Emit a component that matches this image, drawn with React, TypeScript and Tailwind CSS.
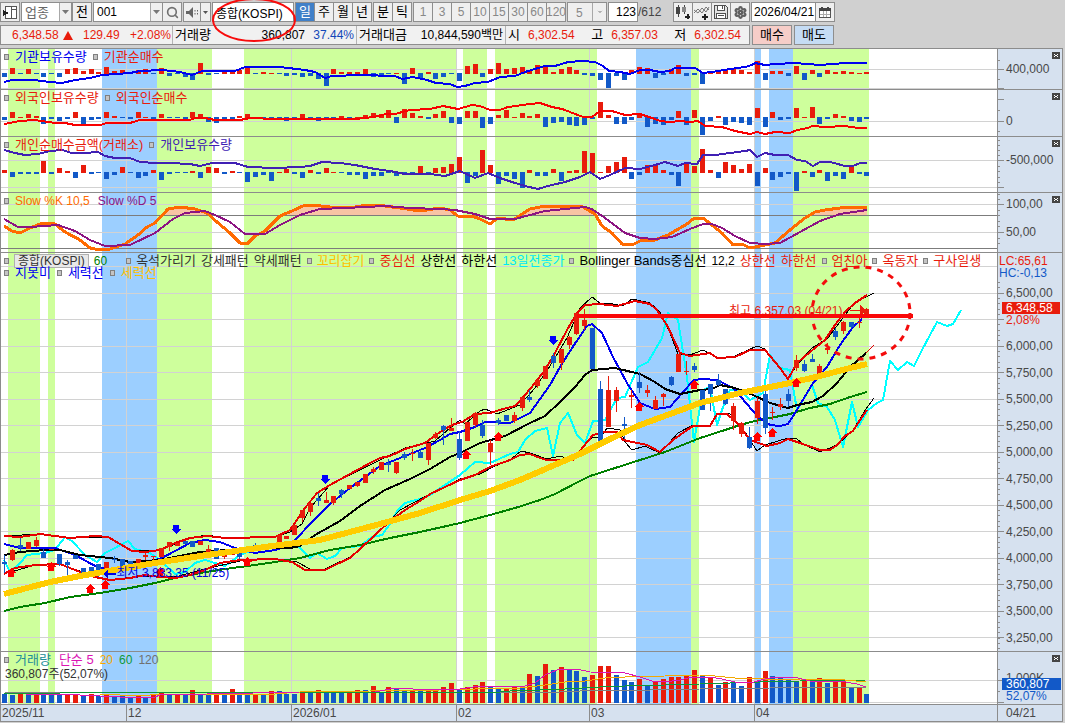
import type { ReactNode } from 'react'
import clsx from 'clsx'
import { ChevronDown, Search, Settings } from 'lucide-react'

const RED = '#e81c0c'
const BLUE = '#1259c8'
const PLOT_W = 996
const FIRST_X = 3.3
const STEP = 7.838

const barX = (i: number) => Math.round(FIRST_X + STEP * i)

// market phase bands behind every panel: [start, end, color]
const bands: [number, number, string][] = [
  [7, 39, '#ceff9c'],
  [47, 54, '#ceff9c'],
  [101, 156, '#9ccfff'],
  [156, 211, '#ceff9c'],
  [243, 456, '#ceff9c'],
  [462, 486, '#ceff9c'],
  [494, 596, '#ceff9c'],
  [635, 690, '#9ccfff'],
  [690, 698, '#ceff9c'],
  [753, 760, '#9ccfff'],
  [768, 792, '#9ccfff'],
  [792, 868, '#ceff9c'],
]

const months = [125.5, 290.5, 455.5, 588.5, 753.5]

const institution = [
  -4, 6, -1, 5, -1, -4, -1, -4, 5, 6, 3, 5, 2, 7, 3, 4, -1, 4, 5, -1, 6, -3, -1, -4, -7, 11, -2, -1, 3, 2, 4, 7, -1, 2, 1, -1, -3,
  -2, -4, -3, -6, -13, 5, 2, 2, 2, 5, -4, -3, -1, 1, -11, 6, -6, 2, -6, -4, -1, -8, 8, 10, -4, 5, 11, 5, 6, 7, 3, 9, 7, 2, 5, 7, 4,
  -2, -3, -7, -15, -3, -7, 4, 7, 6, -5, -2, 5, 9, -3, -2, -11, 2, 4, 4, 6, 4, 2, 13, -7, 3, 3, -3, 8, -7, 4, -4, 4, 2, 3, 2, 1, 2,
]

const foreign = [
  -3, 6, 1, 4, 2, -7, -2, -4, -2, 6, -7, -3, -2, 6, 2, -1, -2, 6, 1, -4, 4, -1, -1, -2, 6, 4, -5, -6, -3, -2, 2, 4, -1, -1, -2, -3,
  -4, -1, 4, -2, -4, -2, -1, 2, -1, 1, 3, 5, 4, 8, -6, 9, 5, 2, -2, 4, 7, -6, -7, 7, 7, -11, -7, 3, 8, 1, 5, 2, 4, -10, -6, -5, -8,
  -9, -8, -2, 16, 3, -7, -7, -3, 5, -10, -7, -8, -3, 7, -8, 8, -18, -4, 2, -8, -5, -6, -8, 10, -10, 6, -3, -2, 10, 1, 11, -7, -2, 4,
  2, -4, -5, -2,
]

const retail = [
  3, -5, -2, -2, -2, 12, -2, 5, 2, -6, 8, -2, -1, -7, -3, 6, -1, -6, -4, 3, -8, -2, -1, -1, 2, -6, 6, 5, -2, 2, -1, -10, -5, -3, -9,
  1, 4, -2, -6, 3, -2, 5, 1, -1, -3, -3, -7, -4, -4, -1, -4, -1, -3, 7, -3, 5, 6, 9, 16, -11, -4, 23, 8, -12, -4, -7, -16, 3, -4, -4,
  4, -9, 2, 3, 22, 20, 1, 7, 11, 16, -7, -3, 8, 8, 3, -3, -14, 10, 7, 24, 3, -6, 11, 8, 4, 9, -14, 5, -8, -5, -2, -19, 2, -5, 3, -9,
  -4, -7, 6, -2, -4,
]

// sign carries the direction of the day
const volume = [
  -9, -8, 9, -9, 8, -8, -8, -8, 8, 8, -7, 9, -7, 8, -7, -7, -6, 8, -6, 8, 11, -8, 8, -8, 13, -9, -8, 9, -8, 14, -11, -9, 9, -9, 12,
  -12, -9, -9, 12, -12, 13, -10, -10, -10, 10, 13, -13, 17, -11, 16, -14, -13, 13, -12, 12, 14, 16, 20, -13, 16, 18, 21, -16, -14, 15,
  16, -17, 29, -27, 39, -33, 36, -33, -32, -26, 28, 37, 37, -28, -23, -21, 24, -18, 21, 24, 26, 26, 27, 33, -27, 26, -18, 21, -21,
  -17, 26, -22, 32, -27, -25, -24, -21, 24, -22, 25, -20, 22, 22, -16, 15, -9,
]

// [up, high, body top, body bottom, low]
const candles: [0 | 1, number, number, number, number][] = [
  [0, 555, 562, 564, 573], [1, 549, 550, 560, 561], [0, 538, 545, 548, 551], [1, 542, 542, 549, 549], [1, 537, 540, 546, 547],
  [0, 549, 552, 558, 558], [1, 549, 549, 550, 550], [0, 554, 554, 564, 566], [0, 560, 562, 565, 575], [0, 555, 555, 559, 559],
  [0, 568, 568, 575, 575], [0, 567, 567, 576, 576], [0, 564, 564, 574, 577], [1, 562, 562, 570, 570], [0, 556, 559, 560, 563],
  [0, 559, 559, 567, 567], [0, 561, 561, 568, 568], [1, 559, 559, 565, 565], [1, 553, 555, 557, 560], [1, 556, 556, 557, 562],
  [1, 548, 548, 557, 557], [1, 542, 542, 547, 551], [1, 543, 543, 546, 546], [0, 541, 541, 544, 544], [0, 541, 541, 547, 547],
  [1, 541, 541, 545, 545], [1, 545, 549, 553, 553], [0, 548, 548, 559, 559], [1, 552, 552, 557, 559], [1, 554, 554, 555, 555],
  [0, 552, 552, 557, 559], [1, 547, 547, 549, 549], [0, 543, 545, 547, 549], [0, 544, 544, 547, 547], [0, 543, 544, 546, 546],
  [1, 535, 535, 544, 544], [1, 536, 536, 539, 539], [1, 525, 525, 535, 535], [1, 510, 510, 518, 522], [1, 503, 503, 512, 516],
  [0, 493, 498, 501, 506], [1, 492, 500, 503, 503], [1, 496, 496, 503, 505], [0, 489, 490, 494, 498], [1, 485, 485, 489, 489],
  [1, 482, 482, 486, 487], [1, 474, 474, 483, 483], [1, 467, 469, 472, 474], [1, 462, 462, 470, 470], [0, 459, 463, 465, 472],
  [1, 462, 462, 473, 474], [0, 452, 454, 458, 460], [1, 449, 453, 454, 461], [0, 450, 452, 458, 458], [1, 443, 443, 460, 465],
  [1, 432, 434, 438, 439], [0, 425, 426, 430, 445], [1, 418, 428, 431, 431], [0, 431, 439, 458, 460], [1, 422, 422, 441, 441],
  [1, 412, 413, 425, 427], [0, 420, 425, 436, 438], [1, 440, 443, 452, 465], [0, 418, 420, 423, 425], [0, 415, 415, 421, 421],
  [1, 412, 415, 421, 423], [1, 397, 397, 408, 411], [0, 390, 397, 400, 402], [1, 379, 380, 386, 388], [1, 366, 366, 379, 379],
  [0, 353, 356, 363, 368], [1, 349, 349, 363, 370], [1, 336, 337, 345, 349], [1, 313, 313, 334, 335], [1, 309, 320, 326, 330],
  [0, 328, 328, 369, 369], [0, 381, 389, 443, 446], [1, 376, 390, 427, 427], [1, 387, 390, 401, 412], [0, 417, 424, 426, 439],
  [1, 390, 395, 397, 408], [0, 372, 382, 388, 393], [1, 385, 390, 393, 397], [1, 396, 400, 409, 409], [1, 393, 394, 397, 406],
  [0, 376, 377, 385, 386], [1, 354, 354, 372, 372], [1, 361, 371, 372, 375], [0, 363, 366, 370, 372], [0, 390, 390, 410, 410],
  [0, 384, 384, 394, 411], [0, 374, 380, 385, 386], [0, 389, 389, 404, 405], [1, 403, 406, 421, 430], [1, 422, 423, 434, 437],
  [0, 427, 437, 448, 449], [1, 397, 401, 418, 424], [0, 391, 394, 428, 434], [1, 407, 412, 413, 420], [1, 398, 404, 407, 410],
  [0, 389, 394, 401, 407], [1, 355, 360, 368, 371], [0, 360, 364, 371, 372], [0, 354, 359, 362, 362], [1, 364, 366, 375, 376],
  [1, 343, 348, 350, 354], [0, 328, 331, 337, 340], [1, 321, 322, 331, 334], [0, 322, 322, 327, 328], [1, 317, 322, 323, 328],
  [1, 308, 309, 315, 315],
]

const institutionHeld =
  '4,82 12,80 34,80 50,82 62,83 75,80 90,78 102,75 130,73 140,71 162,70 180,72 192,75 202,71 235,71 245,67 280,67 305,70 315,72 325,78 332,76 360,75 395,76 402,79 413,77 427,80 436,83 450,84 457,87 465,86 475,83 488,82 500,77 515,76 525,72 545,66 555,66 568,62 582,61 595,62 603,66 609,71 620,72 630,74 640,70 650,70 660,72 670,71 675,68 695,68 703,73 712,72 730,69 745,67 752,65 755,63 765,65 775,64 795,63 820,65 845,63 867,63'
const foreignHeld =
  '4,124 20,121 35,120 55,123 65,123 75,125 100,125 107,123 130,123 140,120 190,120 195,118 205,118 215,120 240,120 250,118 275,119 355,119 365,118 380,116 385,114 395,114 410,110 430,109 443,106 458,109 472,105 480,106 490,110 500,110 508,107 530,104 540,103 552,107 562,109 570,112 583,117 592,117 600,111 612,111 625,115 640,114 652,118 660,121 670,122 680,121 690,122 698,121 705,126 722,127 735,131 750,134 757,132 765,134 775,132 790,133 797,130 808,128 812,126 825,127 845,126 858,128 867,128'
const retailHeld =
  '4,150 15,153 25,155 38,154 50,151 62,150 72,153 85,153 98,152 105,156 115,158 130,158 140,162 155,163 170,163 190,164 200,166 212,163 235,163 248,167 275,168 300,167 310,166 322,162 340,163 355,165 375,169 390,171 405,174 430,174 445,176 460,171 475,178 488,173 500,178 512,182 525,186 538,189 548,186 565,182 580,177 590,172 600,179 610,175 625,168 640,169 655,165 665,162 678,166 685,163 697,164 703,155 715,155 730,153 745,151 750,150 757,157 765,153 775,155 788,155 797,160 805,161 813,166 820,162 830,162 845,166 853,166 860,163 867,163'
const slowK =
  '4,226 12,231 20,233 30,228 43,223 55,224 65,232 80,240 90,248 100,250 110,249 125,244 138,235 147,227 155,223 168,209 180,207 195,209 207,213 217,222 230,233 240,243 247,244 255,236 265,231 280,216 292,211 303,206 312,205 330,207 355,207 368,205 385,206 400,208 420,211 440,208 450,210 458,216 472,216 480,219 490,224 498,218 513,220 522,214 530,209 545,206 560,206 583,207 595,214 602,226 612,233 622,244 632,245 640,241 655,240 668,235 680,228 687,224 693,219 703,218 712,225 722,233 733,245 742,244 750,248 765,245 775,243 790,230 805,218 815,212 825,210 840,208 867,207'
const slowD =
  '4,219 18,227 30,227 58,225 75,231 90,240 105,246 130,245 155,233 173,219 185,213 205,211 215,215 230,222 245,234 265,234 280,225 300,215 320,209 345,208 385,206 410,208 440,209 455,210 475,214 490,219 515,219 545,211 575,208 585,207 592,209 605,218 625,233 640,238 655,239 672,237 690,229 703,224 712,224 722,228 735,236 750,243 765,244 780,243 800,232 820,221 840,214 867,210'

const cyanLine =
  '4,560 10,572 20,563 27,555 45,553 55,550 65,537 72,541 85,555 97,562 105,553 115,548 128,541 135,549 150,553 160,560 175,574 185,572 195,563 205,560 225,566 240,555 265,545 280,548 296,544 310,558 317,553 327,559 335,556 342,548 360,546 372,537 382,535 390,524 397,511 405,503 420,499 430,495 445,485 460,475 475,462 490,463 510,454 518,452 525,440 535,431 547,428 553,456 560,423 568,413 577,435 585,443 593,421 605,420 617,398 625,397 638,367 648,362 662,338 668,313 678,320 687,377 694,442 703,390 710,387 717,425 723,407 730,390 740,390 750,400 763,393 770,355 780,368 790,370 797,410 812,385 818,403 827,407 835,420 843,447 852,402 858,427 868,410 877,403 883,400 890,361 898,370 907,362 914,366 922,350 937,322 947,326 953,324 961,310'
const ma60 =
  '4,611 20,607 45,603 70,597 100,593 130,588 155,583 175,578 200,573 225,569 255,565 275,562 300,558 330,550 360,545 390,538 420,532 460,523 490,515 515,508 540,500 555,494 580,481 590,476 615,468 640,460 665,452 700,438 725,430 740,425 755,421 770,418 790,414 810,408 830,404 850,397 867,392'
const powerLine =
  '4,594 50,582 80,576 120,569 155,563 200,556 250,549 280,545 320,540 350,532 380,524 420,513 460,500 490,491 520,480 550,467 580,454 610,439 640,425 670,414 700,403 720,398 740,393 790,383 820,376 850,368 867,364'
const blueMa =
  '4,544 20,548 55,548 75,555 97,567 110,570 130,569 150,562 162,558 175,551 190,543 205,540 220,542 235,548 255,553 275,550 290,545 297,538 310,524 330,504 350,488 380,466 400,458 425,448 440,440 450,434 460,432 475,427 485,422 510,423 520,418 530,413 540,399 550,385 560,367 574,345 587,326 592,324 602,333 613,357 627,383 640,403 655,409 670,407 683,392 694,380 703,379 717,380 733,388 747,404 758,417 770,425 780,426 788,424 795,413 813,383 827,367 840,345 853,327 862,319'
const midBand =
  '4,555 20,552 45,550 60,550 80,555 110,558 130,562 160,560 200,552 240,549 290,548 300,546 315,535 340,521 360,506 385,490 410,479 430,469 450,457 460,453 480,443 505,436 530,423 545,416 560,402 575,387 585,375 592,370 615,368 640,374 655,382 665,389 680,394 690,392 700,390 712,389 720,385 735,388 753,395 770,403 788,408 797,405 812,402 823,396 837,383 850,367 866,353'
const upperBand =
  '4,536 20,537 40,534 70,538 95,536 108,537 120,544 132,551 145,552 160,550 175,543 190,538 207,536 225,538 275,537 290,530 305,508 317,493 330,485 350,474 370,463 380,458 390,456 405,449 425,443 440,432 452,425 462,422 475,414 490,413 503,409 515,406 525,395 535,383 545,370 555,353 567,330 577,313 585,305 600,304 617,306 635,301 650,304 657,310 668,327 680,353 690,356 710,353 717,358 735,357 750,350 765,350 780,368 788,379 797,363 810,352 825,340 835,325 845,312 855,303 867,295'
const upperThin =
  '4,536 40,534 70,538 108,537 132,551 160,550 190,538 207,535 225,538 275,537 290,532 302,524 310,508 330,485 350,475 380,460 405,448 435,441 450,428 460,420 465,424 480,411 485,409 497,414 520,405 535,388 550,366 567,338 580,308 592,297 600,303 609,303 622,306 632,299 650,303 660,312 670,333 678,354 690,355 703,350 717,358 735,356 757,346 765,349 788,379 797,365 812,348 828,338 840,322 855,302 874,293'
const lowerBand =
  '4,574 15,568 35,565 60,564 75,570 95,577 110,580 130,578 145,575 160,577 175,578 190,575 205,570 220,563 240,560 275,559 292,562 305,570 325,570 335,565 350,558 360,549 375,535 390,521 405,510 420,501 430,494 460,480 475,475 490,467 510,460 520,455 530,454 540,458 547,460 573,460 583,447 593,435 605,432 617,432 623,440 647,445 660,452 673,440 687,430 693,426 710,426 717,414 727,414 737,423 750,440 767,446 780,443 788,439 800,443 820,450 830,450 837,445 845,436 853,431 860,420 867,410'
const lowerThin =
  '4,574 35,565 60,564 85,573 110,580 145,576 175,577 205,569 240,561 275,559 297,562 310,569 325,569 350,557 375,536 400,510 430,494 460,479 480,474 495,466 510,460 521,451 530,453 547,459 560,456 573,461 583,446 593,437 600,438 607,428 620,430 625,442 632,450 645,446 660,453 678,433 693,425 710,426 718,413 730,414 745,432 757,451 765,445 788,438 797,439 803,444 820,452 837,445 853,430 866,409 874,398'

const buyMarks = [
  [11, 573], [51, 567], [90, 589], [105, 585], [160, 572], [247, 562], [466, 455], [498, 437], [639, 407], [694, 385], [757, 437],
  [772, 433], [796, 383],
]
const sellMarks = [[176, 529], [325, 479], [553, 340]]

const prices = ['6,500,00', '', '6,000,00', '5,750,00', '5,500,00', '5,250,00', '5,000,00', '4,750,00', '4,500,00', '4,250,00', '4,000,00', '3,750,00', '3,500,00', '3,250,00']

function Line({ points, color, width = 2 }: { points: string; color: string; width?: number }) {
  return <polyline points={points} fill="none" stroke={color} strokeWidth={width} strokeLinejoin="round" />
}

function Bars({ values, base }: { values: number[]; base: number }) {
  return (
    <>
      {values.map((v, i) => (
        <rect key={i} x={barX(i) - 1} y={v > 0 ? base + 1 - v : base} width={5} height={Math.abs(v)} fill={v > 0 ? RED : BLUE} />
      ))}
    </>
  )
}

type PlotProps = { top: number; height: number; grid?: number[]; guides?: number[]; children: ReactNode }

// all panels share one vertical coordinate space, each shows its own slice
function Plot({ top, height, grid = [], guides = [], children }: PlotProps) {
  return (
    <svg
      className="absolute inset-0 h-full w-full"
      viewBox={`0 ${top} ${PLOT_W} ${height}`}
      preserveAspectRatio="none"
      shapeRendering="crispEdges"
      aria-hidden="true"
    >
      {bands.map(([a, b, fill]) => (
        <rect key={a} x={a} y={top} width={b - a} height={height} fill={fill} />
      ))}
      {months.map((x) => (
        <line key={x} x1={x} x2={x} y1={top} y2={top + height} stroke="#d2d2d2" />
      ))}
      {grid.map((y) => (
        <line key={y} x1={0} x2={PLOT_W} y1={y} y2={y} stroke="#d2d2d2" />
      ))}
      {guides.map((y) => (
        <line key={y} x1={0} x2={PLOT_W} y1={y} y2={y} stroke="#7c7c7c" />
      ))}
      <g transform="translate(-1 0)">{children}</g>
    </svg>
  )
}

function Ticks({ top, height, major, minor = [] }: { top: number; height: number; major: number[]; minor?: number[] }) {
  return (
    <svg className="absolute inset-y-0 left-0 h-full w-2" viewBox={`0 ${top} 8 ${height}`} preserveAspectRatio="none" shapeRendering="crispEdges" aria-hidden="true">
      {major.map((y) => (
        <line key={y} x1={0} x2={6} y1={y} y2={y} stroke="#8c8c8c" />
      ))}
      {minor.map((y) => (
        <line key={y} x1={0} x2={2} y1={y} y2={y} stroke="#8c8c8c" />
      ))}
    </svg>
  )
}

function CloseBox({ label }: { label: string }) {
  return (
    <button aria-label={label} className="absolute right-[2px] top-[3px] flex h-[7px] w-2 items-center justify-center bg-[#454545]">
      <svg viewBox="0 0 8 7" className="h-[7px] w-2" shapeRendering="crispEdges">
        <path d="M2 2h1v1h2v-1h1v1h-1v1h1v1h-1v-1h-2v1h-1v-1h1v-1h-1z" fill="#fff" />
      </svg>
    </button>
  )
}

function Panel({ className, plot, axis, name }: { className: string; plot: ReactNode; axis: ReactNode; name?: string }) {
  return (
    <section className={clsx('flex border-t border-[#8c8c8c]', className)}>
      <div className="relative min-w-0 flex-1 overflow-hidden bg-white">{plot}</div>
      <div className="relative w-[65px] shrink-0 border-l border-[#8c8c8c] bg-[#d6e1ef] text-xs leading-3 text-[#484848]">
        {axis}
        {name && <CloseBox label={`${name} 닫기`} />}
      </div>
    </section>
  )
}

const Dot = () => <i className="h-[6px] w-[5px] shrink-0 border border-[#808080] bg-[#c4c4c4]" />

function Legend({ children, className }: { children: ReactNode; className?: string }) {
  return (
    <div className={clsx('absolute left-[3px] flex items-center whitespace-nowrap text-[13px]', className)}>{children}</div>
  )
}

function ToolButton({ children, className, label }: { children: ReactNode; className?: string; label?: string }) {
  return (
    <button aria-label={label} className={clsx('-ml-px flex h-5 shrink-0 items-center justify-center border border-[#8e8e8e] first:ml-0', className ?? 'w-5 bg-[#efefef]')}>
      {children}
    </button>
  )
}

function ToolSelect({ label, value, className }: { label: string; value: string; className: string }) {
  return (
    <div className={clsx('relative h-5 shrink-0 border border-[#8e8e8e] bg-white', className)}>
      <select aria-label={label} className="h-full w-full appearance-none bg-transparent pl-[3px] leading-4 outline-none" defaultValue={value}>
        <option>{value}</option>
      </select>
      <span className="pointer-events-none absolute inset-y-0 right-0 flex w-3 items-center justify-center border-l border-[#a8a8a8] bg-[#efefef]">
        <svg width="7" height="4" viewBox="0 0 7 4"><path d="M0 0h7L3.5 4z" fill="#777" /></svg>
      </span>
    </div>
  )
}

function Toolbar() {
  return (
    <div className="flex items-center gap-px pt-[2px] text-[13px] text-black">
      <ToolButton label="화면 목록">
        <svg width="14" height="13" viewBox="0 0 14 13" shapeRendering="crispEdges">
          <path d="M2.5.5h11v12h-11zM8.5.5v12M8.5 3.5h5" fill="#fff" stroke="#555" />
          <path d="M0 4l6 3-6 3z" fill="#222" />
        </svg>
      </ToolButton>
      <ToolSelect label="업종 구분" value="업종" className="w-[51px] text-[#666]" />
      <ToolButton>전</ToolButton>
      <div className="flex">
        <ToolSelect label="종목 코드" value="001" className="w-[70px] text-xs" />
        <ToolButton label="검색"><Search size={13} color="#707070" strokeWidth={3} /></ToolButton>
      </div>
      <div className="flex">
        <ToolButton label="소리" className="w-[18px] bg-[#efefef]">
          <svg width="13" height="11" viewBox="0 0 13 11">
            <path d="M0 4h3l4-4v11l-4-4H0z" fill="#666" />
            <path d="M9 3v1.5M9 6v1.5M11.500 3v1.5M11.500 6v1.5" stroke="#666" />
          </svg>
        </ToolButton>
        <ToolButton label="소리 설정" className="w-[11px] bg-[#efefef]">
          <svg width="5" height="3" viewBox="0 0 5 3"><path d="M0 0h5L2.5 3z" fill="#555" /></svg>
        </ToolButton>
      </div>
      <div className="relative">
        <input aria-label="종목명" defaultValue="종합(KOSPI)" className="block h-5 w-[82px] border border-[#8e8e8e] bg-white pl-[3px] text-xs outline-none" />
        <svg className="pointer-events-none absolute -left-px -top-[2px] z-10 h-[44px] w-[86px]" viewBox="0 0 86 44" aria-hidden="true">
          <ellipse cx="43" cy="20" rx="41" ry="21" fill="none" stroke="#f80c0c" strokeWidth="2" />
        </svg>
      </div>
      <div className="flex">
        {['일', '주', '월', '년'].map((p) => (
          <ToolButton key={p} className={p === '일' ? 'w-5 bg-[#4080c8] text-white' : 'w-5 bg-[#efefef]'}>{p}</ToolButton>
        ))}
      </div>
      <div className="flex">
        <ToolButton>분</ToolButton>
        <ToolButton>틱</ToolButton>
      </div>
      <div className="flex text-xs text-[#888]">
        {[1, 3, 5, 10, 15, 30, 60, 120].map((n) => (
          <ToolButton key={n}>{n}</ToolButton>
        ))}
      </div>
      <div className="relative h-5 w-10 shrink-0 border border-[#8e8e8e] bg-[#efefef]">
        <select aria-label="분 간격" className="h-full w-full appearance-none bg-transparent pl-2 text-xs text-[#888]" defaultValue="5">
          <option>5</option>
        </select>
        <span className="pointer-events-none absolute inset-y-0 right-0 flex w-[14px] items-center justify-center border-l border-[#a8a8a8]">
          <ChevronDown size={8} fill="#b0b0b0" color="#b0b0b0" />
        </span>
      </div>
      <label className="flex items-center text-xs text-[#444]">
        <input aria-label="표시 봉수" defaultValue="123" className="block h-5 w-[30px] border border-[#8e8e8e] bg-white pr-px text-right text-black outline-none" />
        <span className="w-[34px]">/612</span>
      </label>
      <div className="flex">
        <ToolButton label="봉 추가">
          <svg width="16" height="15" viewBox="0 0 16 15" shapeRendering="crispEdges">
            <path d="M3 0v12M9 0v9" stroke="#444" />
            <path d="M1 2h4v7H1z" fill="#444" />
            <path d="M7 2h4v5H7z" fill="#888" />
            <path d="M10 12h5M12.500 9v5" stroke="#222" strokeWidth="2" />
          </svg>
        </ToolButton>
        <ToolButton label="지표 추가">
          <svg width="16" height="15" viewBox="0 0 16 15">
            <path d="M0 8l4-4 4 4 4-6 3 3M0 5l4 3 4-5 4 4 3-5" fill="none" stroke="#777" />
            <path d="M8 12h6M11 9v6" stroke="#222" strokeWidth="2" />
          </svg>
        </ToolButton>
        <ToolButton label="저장">
          <svg width="14" height="14" viewBox="0 0 14 14" shapeRendering="crispEdges">
            <path d="M.5.5h11l2 2v11H.5z" fill="#e4e4e4" stroke="#505050" />
            <path d="M3.5.5h7v5h-7zM2.5 8.5h9v5h-9z" fill="#fff" stroke="#505050" />
            <path d="M8 1h1v3H8zM4 10h6v1H4z" fill="#505050" />
          </svg>
        </ToolButton>
        <ToolButton label="설정"><Settings size={13} color="#606060" strokeWidth={4} /></ToolButton>
      </div>
      <div className="flex">
        <input aria-label="기준일" defaultValue="2026/04/21" className="block h-5 w-[65px] border border-[#8e8e8e] bg-white pl-[2px] text-xs outline-none" />
        <ToolButton label="달력">
          <svg width="12" height="11" viewBox="0 0 12 11" shapeRendering="crispEdges">
            <path d="M.5 1.5h11v9H.5z" fill="#fff" stroke="#555" />
            <path d="M0 1h12v3H0zM2 0h2v1H2zM8 0h2v1H8z" fill="#444" />
            <path d="M4.5 4v6M7.5 4v6M1 7.5h10" stroke="#aaa" />
          </svg>
        </ToolButton>
      </div>
    </div>
  )
}

function Quote() {
  return (
    <div className="mt-[3px] flex gap-[2px] text-xs text-black">
      <div className="flex h-5 w-[750px] items-center whitespace-nowrap border border-[#8e8e8e] bg-[#f1f1f1]">
        <div className="flex h-full w-[172px] items-center justify-between border-r border-[#b4b4b4] pl-[11px] pr-px text-[#e81c0c]">
          <span className="flex items-center gap-1">
            6,348.58
            <svg width="10" height="9" viewBox="0 0 10 9"><path d="M5 0l5 9H0z" fill={RED} /></svg>
          </span>
          <span>129.49</span>
          <span>+2.08%</span>
        </div>
        <div className="flex h-full w-[184px] items-center border-r border-[#b4b4b4] px-[2px]">
          <span className="text-[13px]">거래량</span>
          <span className="flex-1 text-right">360,807</span>
          <span className="w-[49px] text-right text-[#1246b8]">37.44%</span>
        </div>
        <div className="flex h-full w-[149px] items-center justify-between border-r border-[#b4b4b4] px-[2px]">
          <span className="text-[13px]">거래대금</span>
          <span>10,844,590백만</span>
        </div>
        <dl className="flex flex-1 items-center justify-between pl-[2px] pr-2">
          {[['시', '6,302.54'], ['고', '6,357.03'], ['저', '6,302.54']].map(([k, v]) => (
            <div key={k} className="flex items-center gap-2">
              <dt className="text-[13px]">{k}</dt>
              <dd className="text-[#e81c0c]">{v}</dd>
            </div>
          ))}
        </dl>
      </div>
      <button className="h-5 w-10 border border-[#8e8e8e] bg-[#f6cdc8] text-[13px] leading-4">매수</button>
      <button className="h-5 w-10 border border-[#8e8e8e] bg-[#c5dcf4] text-[13px] leading-4">매도</button>
    </div>
  )
}

const priceGrid = Array.from({ length: 15 }, (_, i) => Math.round(266 + i * 26.53) + 0.5)
const priceMinor = Array.from({ length: 70 }, (_, i) => Math.round(282 + i * 5.306) + 0.5)

function PricePlot() {
  return (
    <>
      <Plot top={253} height={398} grid={priceGrid}>
        <Line points={cyanLine} color="#00ffff" />
        <Line points={upperThin} color="#000" width={1} />
        <Line points={lowerThin} color="#000" width={1} />
        <Line points={ma60} color="#008000" />
        <Line points={blueMa} color="#0000f0" />
        <Line points="866,353 874,345" color="#e00000" width={1} />
        <Line points={midBand} color="#000" />
        <Line points={upperBand} color="#e60000" />
        <Line points={lowerBand} color="#e60000" />
        {candles.map(([up, high, top, bottom, low], i) => {
          const x = barX(i) + 1
          return (
            <g key={i} fill={up ? RED : BLUE}>
              <rect x={x} y={high} width={1} height={low - high} />
              <rect x={x - 2} y={top} width={5} height={bottom - top} />
            </g>
          )
        })}
        <Line points={powerLine} color="#ffcc00" width={6} />
        {buyMarks.map(([x, y]) => (
          <path key={x} d={`M${x} ${y - 5}l5 5h-2v4h-6v-4h-2z`} fill="#f00" />
        ))}
        {sellMarks.map(([x, y]) => (
          <path key={x} d={`M${x} ${y + 5}l5-5h-2v-4h-6v4h-2z`} fill="#00f" />
        ))}
        <path d="M103 574l5-5v4h8v2h-8v4z" fill="#0000e0" />
        <path d="M866 311l-6-6v5h-10v1h10v5z" fill={RED} />
      </Plot>
      <span className="absolute left-[73.1%] top-[13%] text-xs leading-3 text-[#e81c0c]">최고 6,357.03 (04/21)</span>
      <span className="absolute left-[11.6%] top-[79%] text-xs leading-3 text-[#0000e0]">최저 3,833.35 (11/25)</span>
      {/* hand-drawn marks sit above the price labels */}
      <svg className="absolute inset-0 h-full w-full" viewBox={`0 253 ${PLOT_W} 398`} preserveAspectRatio="none" aria-hidden="true">
        <line x1={576} x2={912} y1={316} y2={316} stroke="#fa0808" strokeWidth={4} />
        <ellipse cx={860} cy={313} rx={49} ry={46} fill="none" stroke="#f40c0c" strokeWidth={3} strokeDasharray="6 6" />
      </svg>
      <Legend className="top-0 gap-[5px] leading-4">
        <Dot />
        <span className="border border-[#b0b0b0] bg-[#e8e8e8] px-[3px] text-xs leading-3 text-[#333]">종합(KOSPI)</span>
        <span className="pr-[14px] text-xs text-[#008000]">60</span>
        <Dot />
        <span className="text-[#333]">옥석가리기</span>
        <span className="text-[#333]">강세패턴</span>
        <span className="text-[#333]">약세패턴</span>
        <Dot />
        <span className="text-[#ffc000]">꼬리잡기</span>
        <Dot />
        <span className="text-[#e81c0c]">중심선</span>
        <span>상한선</span>
        <span>하한선</span>
        <span className="text-[#00e8f8]">13일전종가</span>
        <Dot />
        <span>Bollinger Bands중심선</span>
        <span className="text-xs">12,2</span>
        <span className="text-[#e81c0c]">상한선</span>
        <span className="text-[#e81c0c]">하한선</span>
        <Dot />
        <span className="text-[#e81c0c]">엄친아</span>
        <Dot />
        <span className="text-[#e81c0c]">옥동자</span>
        <Dot />
        <span className="text-[#e81c0c]">구사일생</span>
      </Legend>
      <Legend className="top-[14px] gap-[6px] leading-3">
        <Dot />
        <span className="text-[#0000f0]">지못미</span>
        <Dot />
        <span className="text-[#0000f0]">세력선</span>
        <Dot />
        <span className="text-[#ffc000]">세력선</span>
      </Legend>
    </>
  )
}

export default function App() {
  return (
    <main
      className="flex min-h-screen flex-col bg-[#d0d0d0] pb-[1px] pr-[2px]"
      style={{ fontFamily: '"Liberation Sans", "Noto Sans CJK KR", sans-serif' }}
    >
      <Toolbar />
      <Quote />

      <div className="mt-[3px] flex flex-1 flex-col border-x border-b border-[#8c8c8c]">
        <Panel
          className="h-[41px]"
          name="기관"
          plot={
            <>
              <Plot top={49} height={40} grid={[69.5, 88.5]}>
                <Bars values={institution} base={73} />
                <Line points={institutionHeld} color="#0000f0" />
              </Plot>
              <Legend className="top-0 gap-[6px] leading-4">
                <Dot />
                <span className="text-[#0000f0]">기관보유수량</span>
                <Dot />
                <span className="text-[#e81c0c]">기관순매수</span>
              </Legend>
            </>
          }
          axis={
            <>
              <Ticks top={49} height={40} major={[69.5, 88.5]} minor={[60.5, 79.5]} />
              <span className="absolute left-2 top-[14px]">400,000</span>
            </>
          }
        />
        <Panel
          className="h-[47px]"
          name="외국인"
          plot={
            <>
              <Plot top={90} height={46} grid={[121.5]}>
                <Bars values={foreign} base={117} />
                <Line points={foreignHeld} color="#f80000" />
              </Plot>
              <Legend className="top-0 gap-[6px] leading-4">
                <Dot />
                <span className="text-[#e81c0c]">외국인보유수량</span>
                <Dot />
                <span className="text-[#e81c0c]">외국인순매수</span>
              </Legend>
            </>
          }
          axis={
            <>
              <Ticks top={90} height={46} major={[99.5, 121.5]} minor={[110.5, 131.5]} />
              <span className="absolute left-2 top-[25px]">0</span>
            </>
          }
        />
        <Panel
          className="h-[56px]"
          name="개인"
          plot={
            <>
              <Plot top={137} height={55} grid={[160.5, 187.5]}>
                <Bars values={retail} base={172} />
                <Line points={retailHeld} color="#4020b4" />
              </Plot>
              <Legend className="top-0 gap-[6px] leading-4">
                <Dot />
                <span className="text-[#e81c0c]">개인순매수금액(거래소)</span>
                <Dot />
                <span className="text-[#4020b4]">개인보유수량</span>
              </Legend>
            </>
          }
          axis={
            <>
              <Ticks top={137} height={55} major={[160.5, 187.5]} minor={[140.5, 145.5, 150.5, 155.5, 166.5, 171.5, 177.5, 182.5]} />
              <span className="absolute left-2 top-[17px]">-500,000</span>
            </>
          }
        />
        <Panel
          className="h-[60px]"
          name="스토캐스틱"
          plot={
            <>
              <Plot top={193} height={59} grid={[204.5, 232.5]} guides={[215.5, 248.5]}>
                <clipPath id="overbought">
                  <rect x={0} y={193} width={PLOT_W} height={22} />
                </clipPath>
                <polygon points={`4,216 ${slowK} 867,216`} fill="#f8c4a4" clipPath="url(#overbought)" />
                <Line points={slowK} color="#ff6a00" width={3} />
                <Line points={slowD} color="#8c1482" />
              </Plot>
              <Legend className="top-0 gap-[6px] leading-4">
                <Dot />
                <span className="text-xs text-[#ff6a00]">Slow %K 10,5</span>
                <span className="pl-[2px] text-xs text-[#8c1482]">Slow %D 5</span>
              </Legend>
            </>
          }
          axis={
            <>
              <Ticks top={193} height={59} major={[204.5, 232.5]} minor={[194.5, 199.5, 210.5, 215.5, 221.5, 226.5, 238.5, 243.5]} />
              <span className="absolute left-2 top-[5px]">100,00</span>
              <span className="absolute left-2 top-[33px]">50,00</span>
            </>
          }
        />
        <Panel
          className="min-h-[300px] flex-1"
          plot={<PricePlot />}
          axis={
            <>
              <Ticks top={253} height={398} major={priceGrid.slice(1)} minor={priceMinor} />
              <div className="absolute left-px top-[2px] text-[#e81c0c]">LC:65,61</div>
              <div className="absolute left-px top-[14px] text-[#1259c8]">HC:-0,13</div>
              <div className="flex h-full flex-col pl-2 pt-[27px]">
                {prices.map((p, i) => (
                  <div key={i} className="flex flex-1 items-center">{p}</div>
                ))}
              </div>
              <div className="absolute left-1 right-[2px] top-[12.3%]">
                <div className="bg-[#e81c0c] pl-1 text-white">6,348,58</div>
                <div className="pl-1 text-[#e81c0c]">2,08%</div>
              </div>
            </>
          }
        />
        <Panel
          className="h-[53px]"
          name="거래량"
          plot={
            <>
              <Plot top={652} height={52} grid={[680.5, 702.5]}>
                {volume.map((v, i) => (
                  <rect key={i} x={barX(i) - 1} y={703 - Math.abs(v)} width={5} height={Math.abs(v)} fill={v > 0 ? RED : BLUE} />
                ))}
                <Line width={1} color="#808080" points="4,692 62,693 300,693 560,692 600,690 650,690 700,689 770,688 866,687" />
                <Line width={1} color="#109838" points="4,693 60,693 445,692 500,692 510,691 540,690 565,689 600,687 625,686 665,685 700,684 760,682 800,681 866,680" />
                <Line width={1} color="#f4a800" points="100,694 140,696 160,694 275,694 300,692 440,690 460,690 490,688 520,688 545,685 565,682 585,681 605,678 625,677 665,676 700,675 715,676 735,678 765,679 800,679 845,680 866,682" />
                <Line width={1} color="#dc14b4" points="25,694 80,695 120,697 155,697 160,695 300,692 375,692 395,688 430,690 460,689 480,686 525,686 535,683 545,675 557,670 577,669 590,672 625,673 640,677 652,681 665,682 680,680 692,677 710,677 722,679 735,682 750,683 765,679 775,677 798,678 810,681 840,681 857,684 866,687" />
              </Plot>
              <Legend className="top-0 gap-[6px] leading-4">
                <Dot />
                <span className="pr-[2px] text-[#208c98]">거래량</span>
                <span className="text-[#dc14b4]">단순 5</span>
                <span className="text-xs text-[#f4a800]">20</span>
                <span className="text-xs text-[#109838]">60</span>
                <span className="text-xs text-[#707070]">120</span>
              </Legend>
              <span className="absolute left-1 top-4 text-xs leading-3 text-[#333]">360,807주(52,07%)</span>
            </>
          }
          axis={
            <>
              <Ticks top={652} height={52} major={[680.5, 702.5]} minor={[669.5, 691.5]} />
              <span className="absolute left-2 top-5">1,000K</span>
              <div className="absolute left-1 right-px top-[26px]">
                <div className="bg-[#1259c8] pl-1 text-white">360,807</div>
                <div className="pl-1 text-[#1259c8]">52,07%</div>
              </div>
            </>
          }
        />
        <footer className="flex h-[17px] border-t border-[#8c8c8c] bg-[#d6e1ef] text-xs leading-4 text-[#484848]">
          <div className="grid min-w-0 flex-1 grid-cols-[125fr_165fr_165fr_133fr_165fr_243fr]">
            {['2025/11', '12', '2026/01', '02', '03', '04'].map((m) => (
              <span key={m} className="border-l border-[#8c8c8c] pl-px first:border-l-0">{m}</span>
            ))}
          </div>
          <span className="w-[65px] shrink-0 border-l border-[#8c8c8c] pl-2">04/21</span>
        </footer>
      </div>
    </main>
  )
}
